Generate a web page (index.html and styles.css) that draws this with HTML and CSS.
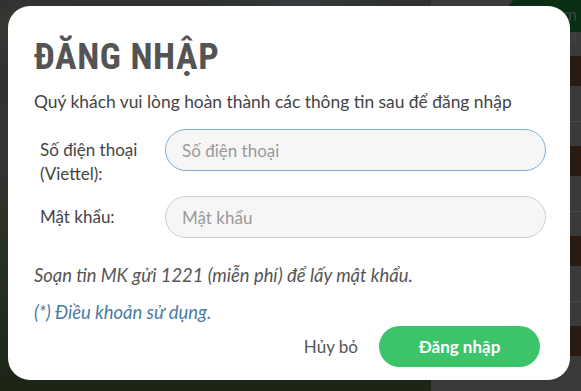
FILE: index.html
```html
<!DOCTYPE html>
<html lang="vi">
<head>
<meta charset="utf-8">
<title>Đăng nhập</title>
<link rel="stylesheet" href="styles.css">
</head>
<body>
<div class="page">
  <div class="hero">
    <div class="hero-photo"></div>
    <aside class="side">
      <a class="pill">Xem thêm</a>
      <ul class="side-list">
        <li class="side-item"><span class="side-thumb"></span></li>
        <li class="side-item"><span class="side-thumb"></span></li>
        <li class="side-item"><span class="side-thumb"></span></li>
        <li class="side-item"><span class="side-thumb"></span></li>
      </ul>
    </aside>
  </div>
  <div class="feed">
    <div class="feed-item">
      <div class="feed-thumb"></div>
      <div class="feed-title">Chong Xa</div>
    </div>
  </div>
</div>

<div class="overlay">
  <form class="modal">
    <h1 class="modal-title">ĐĂNG NHẬP</h1>
    <p class="modal-lead">Quý khách vui lòng hoàn thành các thông tin sau để đăng nhập</p>

    <div class="field">
      <label class="field-label" for="phone">Số điện thoại (Viettel):</label>
      <input class="field-input is-focused" id="phone" type="text" placeholder="Số điện thoại">
    </div>
    <div class="field field-single">
      <label class="field-label" for="pass">Mật khẩu:</label>
      <input class="field-input" id="pass" type="password" placeholder="Mật khẩu">
    </div>

    <p class="hint">Soạn tin MK gửi 1221 (miễn phí) để lấy mật khẩu.</p>
    <a class="terms">(*) Điều khoản sử dụng.</a>

    <div class="actions">
      <button type="button" class="btn-cancel">Hủy bỏ</button>
      <button type="button" class="btn-primary">Đăng nhập</button>
    </div>
  </form>
</div>
</body>
</html>
```

FILE: styles.css
```css
* { box-sizing: border-box; }

html, body {
  margin: 0;
  padding: 0;
  width: 581px;
  height: 391px;
  overflow: hidden;
  font-family: "Lato", "Liberation Sans", sans-serif;
  background: #fafafa;
}

/* ---------- page underneath ---------- */
.page {
  display: flex;
  flex-direction: column;
  height: 391px;
  overflow: hidden;
}

.hero {
  display: flex;
  flex: 0 0 290px;
}

.hero-photo {
  flex: 1;
  background:
    radial-gradient(ellipse 60px 40px at 20px 30px, #c9b9a8 0%, rgba(201,185,168,0) 100%),
    radial-gradient(ellipse 90px 60px at 300px 10px, #b8c8d0 0%, rgba(184,200,208,0) 100%),
    linear-gradient(180deg, #9aa5a2 0%, #a7b3a6 40%, #7f9a6c 75%, #5d7a4a 100%);
}

.side {
  flex: 0 0 150px;
  background: #c4c4c4;
  display: flex;
  flex-direction: column;
  align-items: flex-end;
}

.pill {
  width: 76px;
  height: 36px;
  margin: -4px -2px 0 0;
  padding: 8px 6px 0 0;
  border-radius: 18px 0 0 18px;
  background: #1f9a45;
  color: #cfe9d6;
  font-size: 17px;
  text-align: right;
}

.side-list {
  list-style: none;
  margin: 0;
  padding: 0;
  width: 100%;
}

.side-item {
  height: 90px;
  border-bottom: 1px solid #f2f2f2;
  display: flex;
  justify-content: flex-end;
  padding-top: 24px;
}

.side-thumb {
  width: 50px;
  height: 30px;
  background: #8a5a3a;
}

.feed {
  flex: 1;
  background: #fcfcfc;
  display: flex;
  padding-left: 98px;
  padding-top: 90px;
}

.feed-item {
  display: flex;
  gap: 13px;
}

.feed-thumb {
  width: 60px;
  height: 11px;
  background: #5a3a2c;
}

.feed-title {
  font-family: "Open Sans", sans-serif;
  font-size: 21px;
  color: #111;
  line-height: 22px;
  margin-top: -6px;
}

/* ---------- modal ---------- */
.overlay {
  position: fixed;
  inset: 0;
  background: rgba(0, 0, 0, 0.7);
  padding: 6px 0 0 8px;
}

.modal {
  width: 562px;
  height: 374px;
  background: #fff;
  border-radius: 22px;
  padding: 31px 24px 13px 26px;
  display: flex;
  flex-direction: column;
}

.modal-title {
  margin: 0 0 1px;
  font-family: "Roboto Condensed", "Roboto", sans-serif;
  font-weight: 700;
  font-size: 36px;
  letter-spacing: 0.6px;
  line-height: 40px;
  color: #545454;
}

.modal-lead {
  margin: 12px 0 0;
  font-size: 17.4px;
  line-height: 24px;
  color: #444;
}

.field {
  display: flex;
  align-items: flex-start;
  margin-top: 15px;
}

.field-single {
  margin-top: 10px;
  align-items: center;
}

.field-label {
  flex: 0 0 131px;
  padding: 9px 6px 0 6px;
  font-size: 17px;
  line-height: 24px;
  color: #444;
}

.field-single .field-label {
  padding-top: 0;
}

.field-input {
  flex: 0 0 381px;
  height: 42px;
  border: 1px solid #cfcfcf;
  border-radius: 21px;
  background: #f6f6f6;
  padding: 0 16px;
  font-family: "Lato", sans-serif;
  font-size: 17px;
  color: #333;
  outline: none;
}

.field-input::placeholder {
  color: #9a9a9a;
}

.field-input.is-focused {
  border-color: #7eb2d4;
}

.hint {
  margin: 25px 0 0;
  font-size: 18.4px;
  line-height: 24px;
  font-style: italic;
  color: #555;
}

.terms {
  margin-top: 13px;
  font-size: 18.4px;
  line-height: 24px;
  font-style: italic;
  color: #4a7ca6;
  align-self: flex-start;
}

.actions {
  margin-top: 2px;
  display: flex;
  justify-content: flex-end;
  align-items: center;
  padding-right: 6px;
}

.btn-cancel {
  border: 0;
  background: none;
  font-family: "Lato", sans-serif;
  font-size: 17px;
  color: #555;
  padding: 0;
  margin-right: 21px;
}

.btn-primary {
  width: 161px;
  height: 41px;
  border: 0;
  border-radius: 21px;
  background: #3cc46b;
  color: #fff;
  font-family: "Lato", sans-serif;
  font-weight: 700;
  font-size: 17px;
}
```
